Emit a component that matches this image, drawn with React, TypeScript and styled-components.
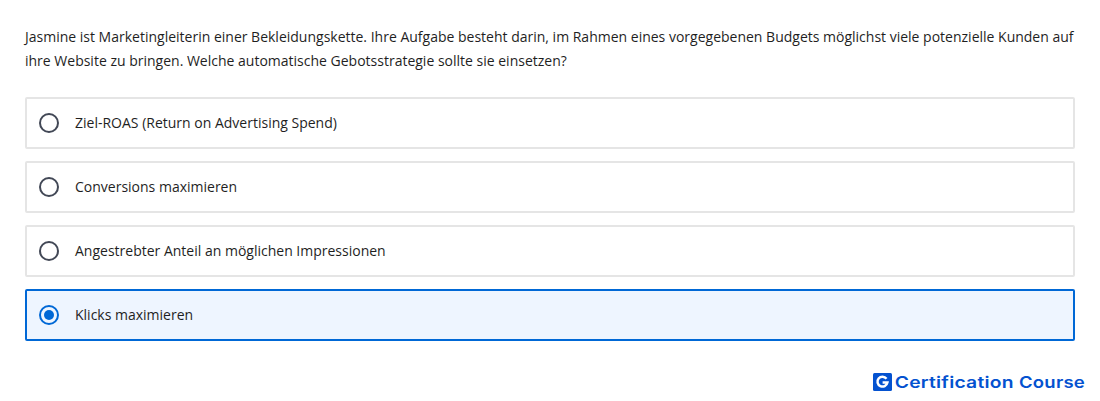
import React, { useState } from "react";
import styled, { createGlobalStyle } from "styled-components";

const GlobalStyle = createGlobalStyle`
  *, *::before, *::after { box-sizing: border-box; }
  body { margin: 0; background: #fff; }
`;

const Page = styled.main`
  display: flex;
  flex-direction: column;
  height: 401px;
  padding: 25px 25px 0;
  overflow: hidden;
  font: 14px/24px "Open Sans", "Noto Sans", sans-serif;
  color: #1f1f1f;
`;

const Question = styled.p`
  margin: 0 0 24px;
`;

const Options = styled.div`
  display: flex;
  flex-direction: column;
  gap: 12px;
`;

const Option = styled.div<{ $selected: boolean }>`
  display: flex;
  align-items: center;
  gap: 16px;
  height: 52px;
  padding: 0 12px;
  border: 2px solid ${(p) => (p.$selected ? "#0068d6" : "#e5e5e5")};
  border-radius: 2px;
  background: ${(p) => (p.$selected ? "#eef5ff" : "#fff")};
  cursor: pointer;
`;

const Radio = styled.span<{ $selected: boolean }>`
  display: flex;
  align-items: center;
  justify-content: center;
  width: 20px;
  height: 20px;
  border: 2px solid ${(p) => (p.$selected ? "#0068d6" : "#424856")};
  border-radius: 50%;
`;

const Dot = styled.span`
  width: 10px;
  height: 10px;
  border-radius: 50%;
  background: #0068d6;
`;

const Brand = styled.footer`
  display: flex;
  align-items: center;
  align-self: flex-end;
  gap: 3px;
  margin: 29px -10px 0 0;
  color: #0452d0;
`;

const BrandName = styled.svg`
  display: block;
  overflow: visible;
  font: 600 16px Inter, sans-serif;
  letter-spacing: 0.2px;
  fill: currentColor;
`;

const answers = [
  "Ziel-ROAS (Return on Advertising Spend)",
  "Conversions maximieren",
  "Angestrebter Anteil an möglichen Impressionen",
  "Klicks maximieren",
];

export default function App() {
  const [selected, setSelected] = useState(3);
  return (
    <Page>
      <GlobalStyle />
      <Question>
        Jasmine ist Marketingleiterin einer Bekleidungskette. Ihre Aufgabe besteht darin, im Rahmen eines vorgegebenen Budgets möglichst viele potenzielle Kunden auf ihre Website zu bringen. Welche automatische Gebotsstrategie sollte sie einsetzen?
      </Question>
      <Options role="radiogroup">
        {answers.map((answer, i) => (
          <Option key={answer} role="radio" aria-checked={i === selected} $selected={i === selected} onClick={() => setSelected(i)}>
            <Radio $selected={i === selected}>{i === selected && <Dot />}</Radio>
            <span>{answer}</span>
          </Option>
        ))}
      </Options>
      <Brand>
        <svg width="19" height="18" viewBox="0 0 19 18">
          <rect width="19" height="18" rx="1.5" fill="currentColor" />
          <path d="M13.5 5.7A5 4.9 0 1 0 14.4 9.6H9.6" fill="none" stroke="#fff" strokeWidth="2.5" />
        </svg>
        <BrandName width="190" height="24">
          <text x="-0.3" y="18" textLength="119" lengthAdjust="spacingAndGlyphs">Certification</text>
          <text x="124" y="18" textLength="66" lengthAdjust="spacingAndGlyphs">Course</text>
        </BrandName>
      </Brand>
    </Page>
  );
}
